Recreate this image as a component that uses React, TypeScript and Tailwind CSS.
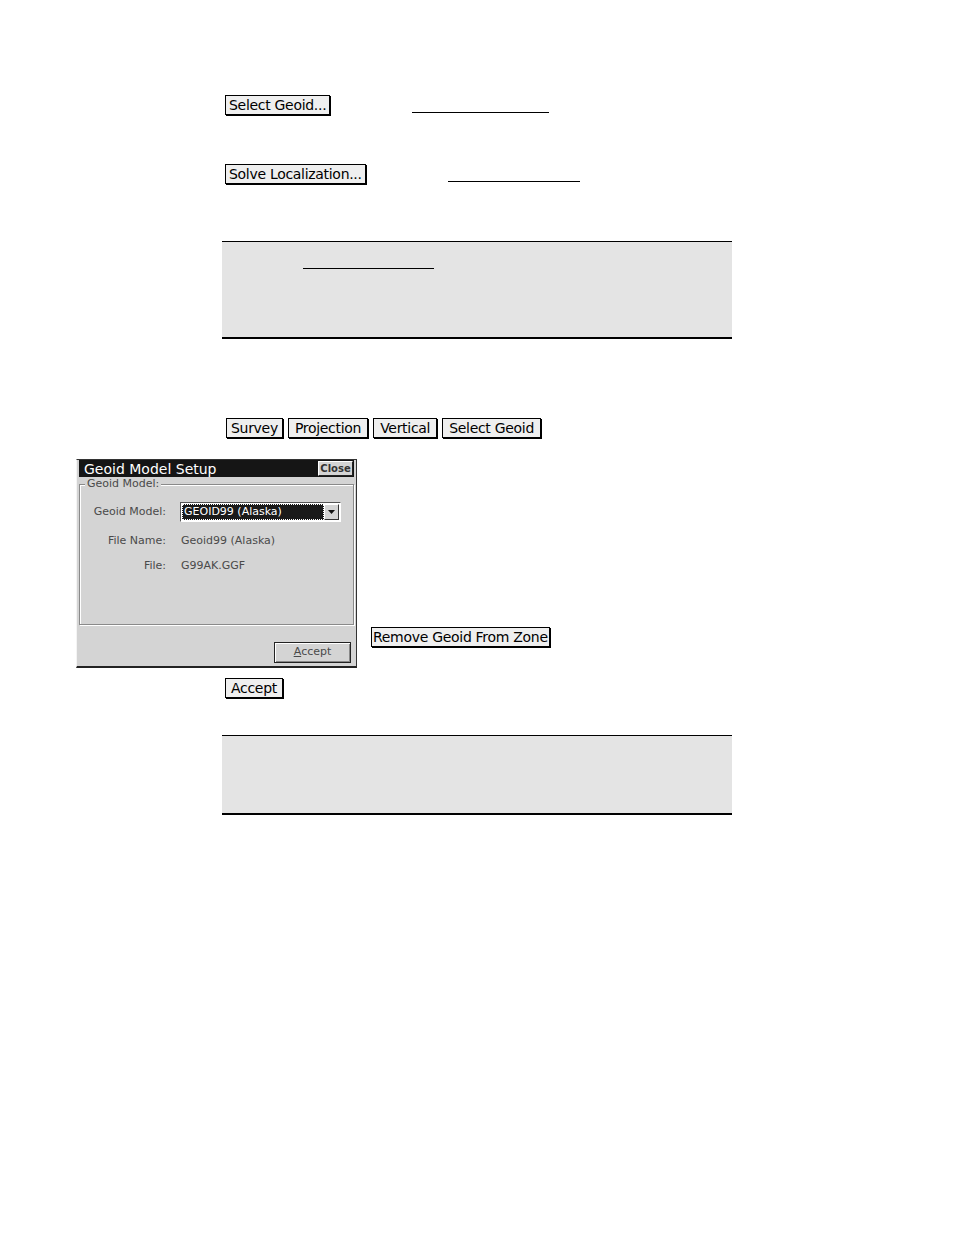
const ui = { fontFamily: '"DejaVu Sans", "Liberation Sans", sans-serif' }

function PageButton({ label, pad = 'px-[3px]' }: { label: string; pad?: string }) {
  return (
    <span
      className={`inline-flex h-[20px] items-center border border-black bg-[#efefef] text-[14px] leading-none tracking-[-0.3px] text-black shadow-[1px_1px_0_#000] ${pad}`}
      style={ui}
    >
      {label}
    </span>
  )
}

function Blank({ width, ml }: { width: string; ml: string }) {
  return <span className={`${width} ${ml} mb-[2px] border-b border-black`} />
}

function GeoidDialog() {
  return (
    <div
      className="flex h-[209px] w-[281px] flex-col border border-[#333] border-b-2 border-b-[#222] border-l-[#f4f4f4] bg-[#d4d4d4] px-[2px] text-[11px] text-[#4a4a4a]"
      style={ui}
    >
      <div className="flex h-[17px] items-center justify-between bg-[#151515] pl-[5px] pr-[1px]">
        <span className="text-[14px] leading-none text-white">Geoid Model Setup</span>
        <span className="flex h-[15px] w-[35px] items-center justify-center border border-t-white border-l-white border-r-[#222] border-b-[#222] bg-[#d4d4d4] text-[10px] font-bold leading-none text-[#333]">
          Close
        </span>
      </div>

      <div className="relative mt-[7px] h-[141px] border border-[#8a8a8a] shadow-[inset_1px_1px_0_#fff,1px_1px_0_#fff]">
        <span className="absolute -top-[7px] left-[5px] bg-[#d4d4d4] px-[2px] leading-none">Geoid Model:</span>

        <div className="mt-[17px] flex items-center">
          <span className="w-[86px] text-right">Geoid Model:</span>
          <div className="ml-[14px] flex h-[20px] w-[161px] items-center border border-t-[#555] border-l-[#555] border-r-white border-b-white bg-white p-[1px]">
            <div className="flex h-full flex-1 items-center border border-dotted border-white bg-[#1a1a1a] pl-[1px] text-white">
              GEOID99 (Alaska)
            </div>
            <div className="flex h-full w-[15px] items-center justify-center border border-t-white border-l-white border-r-[#333] border-b-[#333] bg-[#d4d4d4]">
              <svg width="7" height="4" viewBox="0 0 7 4">
                <path d="M0 0h7L3.5 4z" fill="#111" />
              </svg>
            </div>
          </div>
        </div>

        <div className="mt-[11px] flex items-center">
          <span className="w-[86px] text-right">File Name:</span>
          <span className="ml-[15px]">Geoid99 (Alaska)</span>
        </div>

        <div className="mt-[8px] flex items-center">
          <span className="w-[86px] text-right">File:</span>
          <span className="ml-[15px]">G99AK.GGF</span>
        </div>
      </div>

      <div className="mt-auto mb-[3px] flex justify-end pr-[3px]">
        <span className="flex h-[21px] w-[77px] items-center justify-center border border-[#222] bg-[#d4d4d4] shadow-[inset_1px_1px_0_#fff,inset_-1px_-1px_0_#888]">
          <span className="underline">A</span>ccept
        </span>
      </div>
    </div>
  )
}

export default function App() {
  return (
    <div className="h-[1235px] w-[954px] bg-white">
      <div className="flex flex-col pt-[95px]">
        <div className="ml-[225px] flex items-end">
          <PageButton label="Select Geoid..." />
          <Blank width="w-[137px]" ml="ml-[82px]" />
        </div>

        <div className="ml-[225px] mt-[49px] flex items-end">
          <PageButton label="Solve Localization..." />
          <Blank width="w-[132px]" ml="ml-[82px]" />
        </div>

        <div className="ml-[222px] mt-[57px] h-[98px] w-[510px] border-y border-y-black border-b-2 bg-[#e4e4e4] pl-[81px] pt-[26px]">
          <div className="w-[131px] border-b border-black" />
        </div>

        <div className="ml-[226px] mt-[79px] flex gap-[5px]">
          <PageButton label="Survey" pad="px-[4px]" />
          <PageButton label="Projection" pad="px-[6px]" />
          <PageButton label="Vertical" pad="px-[6px]" />
          <PageButton label="Select Geoid" pad="px-[6px]" />
        </div>

        <div className="ml-[76px] mt-[21px] flex items-end">
          <GeoidDialog />
          <div className="mb-[20px] ml-[14px]">
            <PageButton label="Remove Geoid From Zone" pad="px-[1px]" />
          </div>
        </div>

        <div className="ml-[225px] mt-[10px] flex">
          <PageButton label="Accept" pad="px-[5px]" />
        </div>

        <div className="ml-[222px] mt-[37px] h-[80px] w-[510px] border-y border-y-black border-b-2 bg-[#e4e4e4]" />
      </div>
    </div>
  )
}
